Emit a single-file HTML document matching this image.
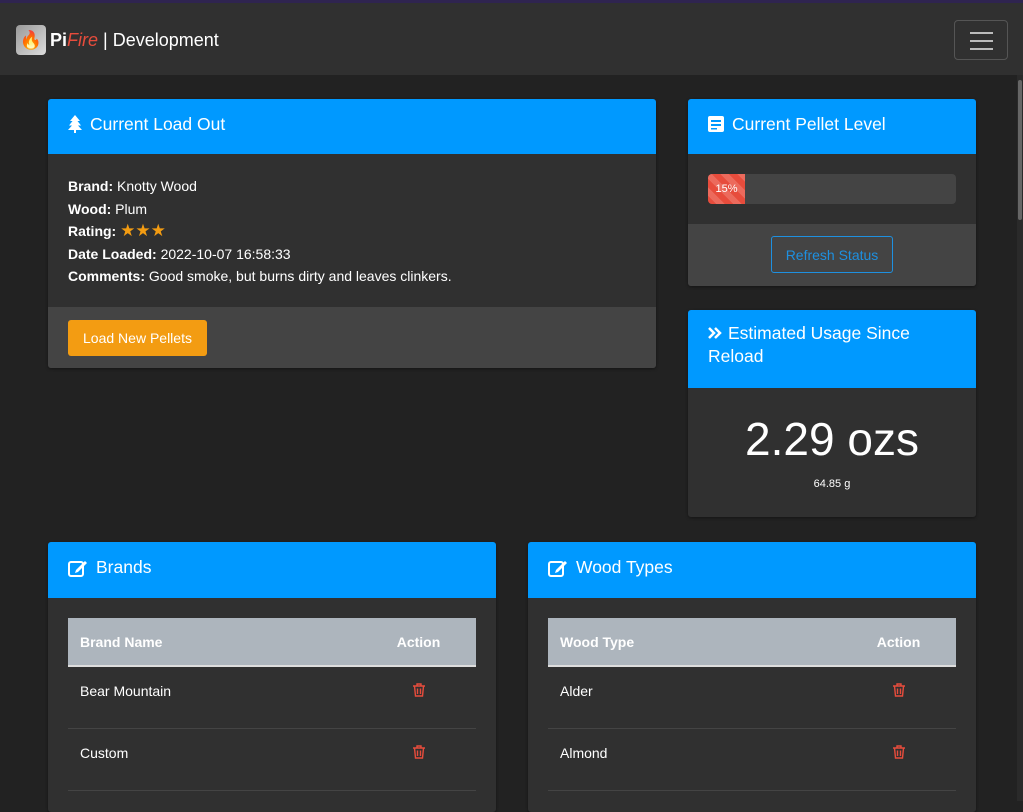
<!DOCTYPE html>
<html><head><style>
*{box-sizing:border-box;margin:0;padding:0}
body{width:1023px;height:801px;overflow:hidden;background:#222;font-family:"Liberation Sans",sans-serif;color:#fff;position:relative}
.top{height:3px;background:#2f2450}
.nav{height:72px;background:#303030;position:relative}
.logo{position:absolute;left:16px;top:22px;width:30px;height:30px;border-radius:4px;background:linear-gradient(135deg,#999,#ddd);text-align:center;font-size:18px;line-height:30px}
.brand{position:absolute;left:50px;top:27px;font-size:18px}
.tog{position:absolute;left:954px;top:17px;width:54px;height:40px;border:1px solid #555;border-radius:4px}
.tog i{position:absolute;left:15px;width:23px;height:2px;background:#bbb}
.card{position:absolute;background:#303030;border-radius:3px;overflow:hidden;box-shadow:0 1px 3px rgba(0,0,0,.4)}
.hd{background:#0099ff;font-size:17.5px;padding:0 20px;display:flex;align-items:center;padding-bottom:5px}
.hd svg{margin-right:8px}
.ft{background:#444;position:absolute;left:0;right:0;bottom:0}
.body{font-size:14px;line-height:22.5px;padding:20px}
b{font-weight:bold}
.star{color:#f39c12;font-size:17px}
table{border-collapse:collapse;width:408px;margin:20px;font-size:14px}
th{background:#adb5bd;text-align:left;height:48px;padding:0 12px;font-size:14px;border-bottom:2px solid #ddd}
td{height:62px;padding:0 12px;border-bottom:1px solid #444;vertical-align:top;padding-top:16px}
.tr{text-align:center;width:115px}
.sb{position:absolute;right:0;top:75px;width:6px;height:726px;background:#2a2a2a}
.sb i{position:absolute;left:1px;top:5px;width:4px;height:140px;background:#666;border-radius:2px}
</style></head><body>
<div class="top"></div>
<div class="nav"><div class="logo">🔥</div><div class="brand"><b>Pi</b><i style="color:#e74c3c">Fire</i> | Development</div>
<div class="tog"><i style="top:11px"></i><i style="top:19px"></i><i style="top:27px"></i></div></div>

<div class="card" style="left:48px;top:99px;width:608px;height:269px">
<div class="hd" style="height:55px"><svg width="14" height="18" viewBox="0 0 14 18"><path d="M7 0L12 6H9.5L13 10.5H10L14 15H8V18H6V15H0L4 10.5H1L4.5 6H2Z" fill="#fff"/></svg>Current Load Out</div>
<div class="body" style="padding-top:21px"><b>Brand:</b> Knotty Wood<br><b>Wood:</b> Plum<br><b>Rating:</b> <span class="star">★★★</span><br><b>Date Loaded:</b> 2022-10-07 16:58:33<br><b>Comments:</b> Good smoke, but burns dirty and leaves clinkers.</div>
<div class="ft" style="height:61px"><div style="position:absolute;left:20px;top:13px;width:139px;height:36px;background:#f39c12;border-radius:3px;font-size:14px;line-height:36px;text-align:center">Load New Pellets</div></div>
</div>

<div class="card" style="left:688px;top:99px;width:288px;height:187px">
<div class="hd" style="height:55px"><svg width="16" height="16" viewBox="0 0 16 16"><rect width="16" height="16" rx="2" fill="#fff"/><rect x="3" y="4" width="10" height="2" fill="#0099ff"/><rect x="3" y="8" width="10" height="2" fill="#0099ff"/><rect x="3" y="12" width="6" height="1.5" fill="#0099ff"/></svg>Current Pellet Level</div>
<div style="position:absolute;left:20px;top:75px;width:248px;height:30px;background:#444;border-radius:4px;overflow:hidden"><div style="width:37px;height:30px;background:repeating-linear-gradient(45deg,#e74c3c 0 6px,#ec6a5c 6px 12px);font-size:11px;line-height:30px;text-align:center">15%</div></div>
<div class="ft" style="height:62px"><div style="position:absolute;left:83px;top:12px;width:122px;height:37px;border:1px solid #1e90e0;border-radius:3px;color:#1e90e0;font-size:14px;line-height:37px;text-align:center">Refresh Status</div></div>
</div>

<div class="card" style="left:688px;top:310px;width:288px;height:207px">
<div class="hd" style="height:78px;line-height:23px;display:block;padding-top:12px"><svg width="14" height="12" viewBox="0 0 14 12" style="margin-right:6px"><path d="M1 1L6 6L1 11M7 1L12 6L7 11" stroke="#fff" stroke-width="2.5" fill="none"/></svg>Estimated Usage Since Reload</div>
<div style="text-align:center;font-size:46px;margin-top:24px;line-height:54px">2.29 ozs</div>
<div style="text-align:center;font-size:11px;margin-top:12px">64.85 g</div>
</div>

<div class="card" style="left:48px;top:542px;width:448px;height:270px">
<div class="hd" style="height:56px"><svg width="20" height="18" viewBox="0 0 20 18"><rect x="1" y="3" width="14" height="14" rx="2" stroke="#fff" stroke-width="2" fill="none"/><path d="M8 11L17 2L19 4L10 13L7 14Z" fill="#fff"/></svg>Brands</div>
<table><tr><th>Brand Name</th><th style="width:115px;text-align:center">Action</th></tr>
<tr><td>Bear Mountain</td><td class="tr"><svg width="12" height="14" viewBox="0 0 12 14"><path d="M0 3H12M4 3V1H8V3M1.5 3L2.5 13H9.5L10.5 3M4.5 5.5V11M7.5 5.5V11" stroke="#e74c3c" stroke-width="1.4" fill="none"/></svg></td></tr><tr><td>Custom</td><td class="tr"><svg width="12" height="14" viewBox="0 0 12 14"><path d="M0 3H12M4 3V1H8V3M1.5 3L2.5 13H9.5L10.5 3M4.5 5.5V11M7.5 5.5V11" stroke="#e74c3c" stroke-width="1.4" fill="none"/></svg></td></tr></table>
</div>
<div class="card" style="left:528px;top:542px;width:448px;height:270px">
<div class="hd" style="height:56px"><svg width="20" height="18" viewBox="0 0 20 18"><rect x="1" y="3" width="14" height="14" rx="2" stroke="#fff" stroke-width="2" fill="none"/><path d="M8 11L17 2L19 4L10 13L7 14Z" fill="#fff"/></svg>Wood Types</div>
<table><tr><th>Wood Type</th><th style="width:115px;text-align:center">Action</th></tr>
<tr><td>Alder</td><td class="tr"><svg width="12" height="14" viewBox="0 0 12 14"><path d="M0 3H12M4 3V1H8V3M1.5 3L2.5 13H9.5L10.5 3M4.5 5.5V11M7.5 5.5V11" stroke="#e74c3c" stroke-width="1.4" fill="none"/></svg></td></tr><tr><td>Almond</td><td class="tr"><svg width="12" height="14" viewBox="0 0 12 14"><path d="M0 3H12M4 3V1H8V3M1.5 3L2.5 13H9.5L10.5 3M4.5 5.5V11M7.5 5.5V11" stroke="#e74c3c" stroke-width="1.4" fill="none"/></svg></td></tr></table>
</div>
<div class="sb"><i></i></div>
</body></html>
